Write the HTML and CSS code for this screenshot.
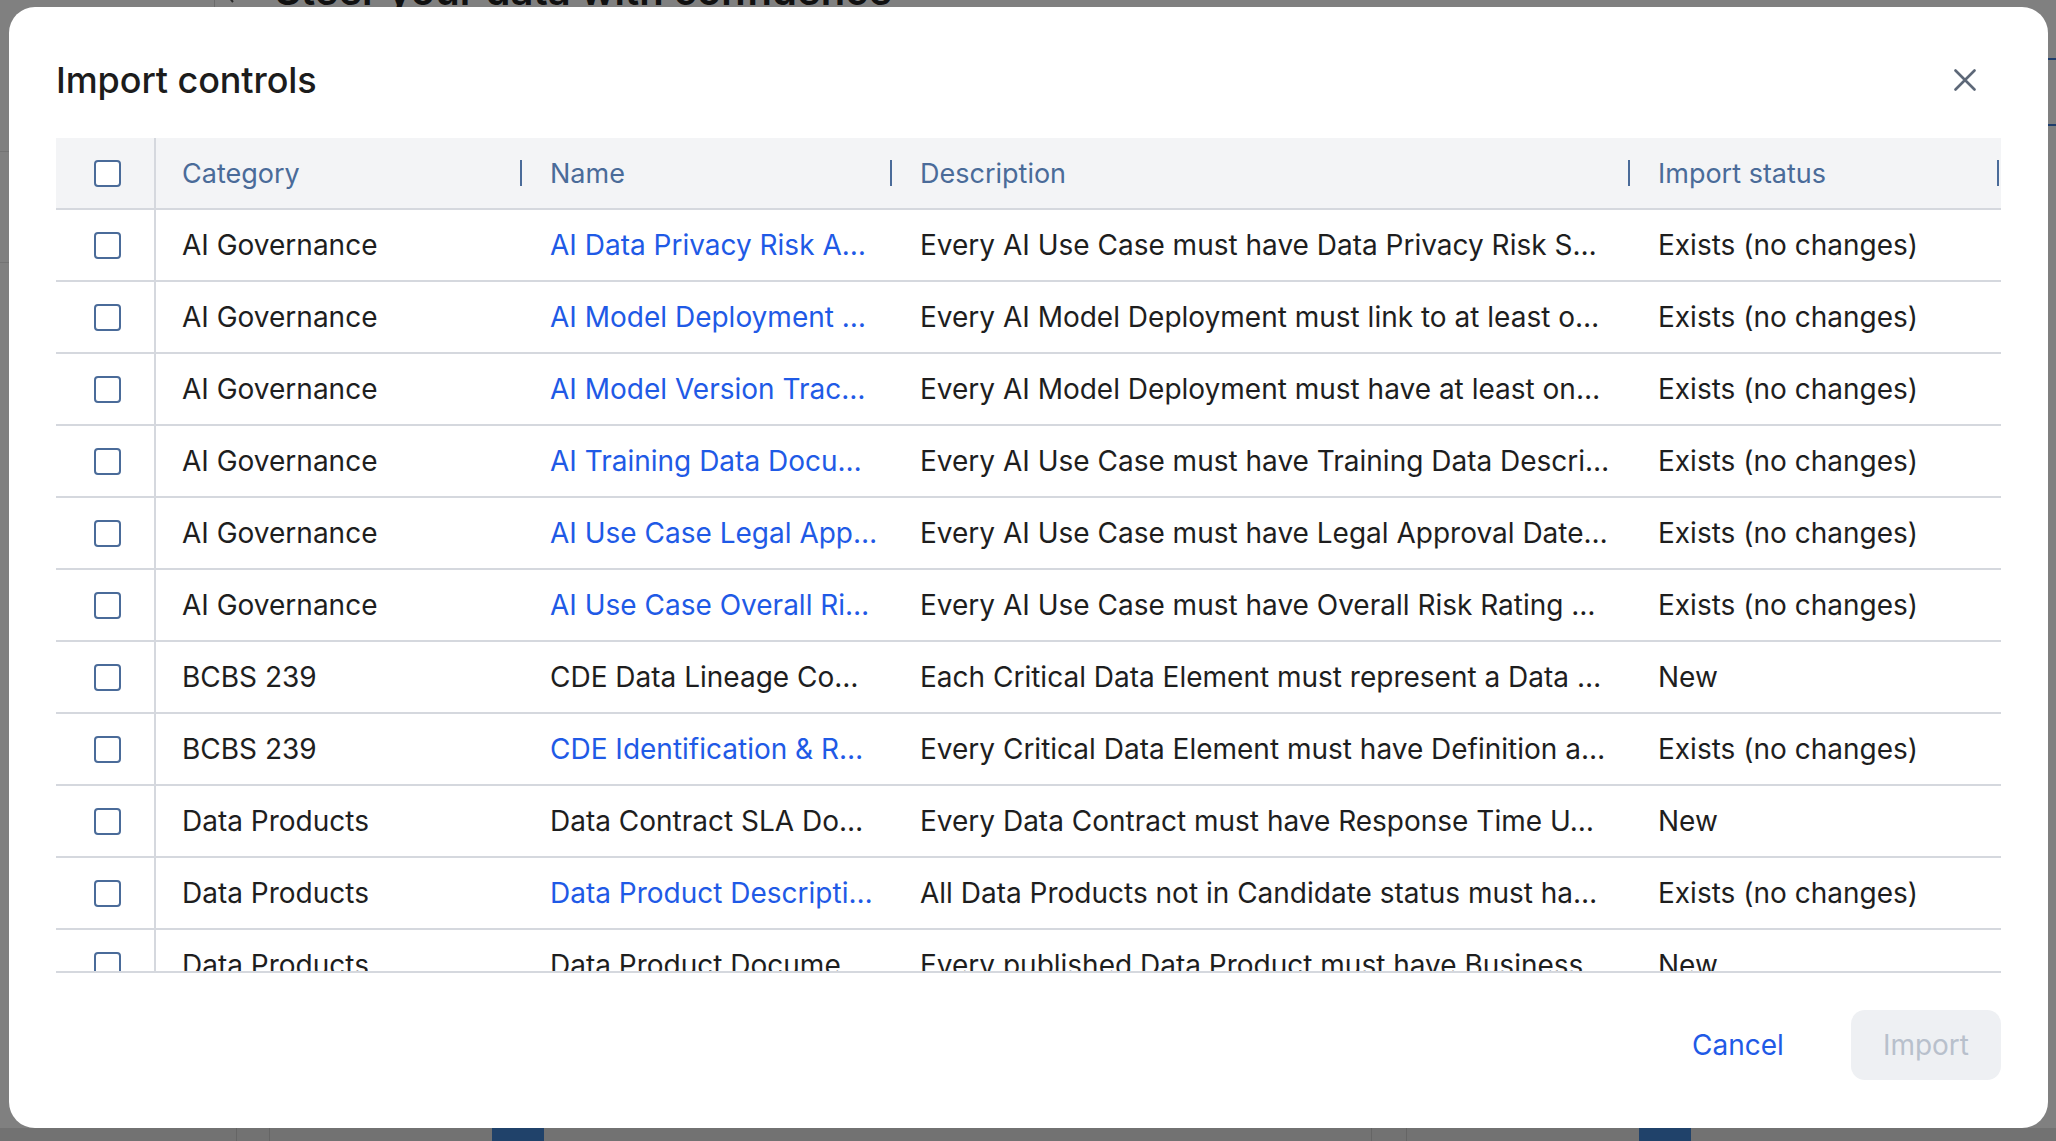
FILE: index.html
```html
<!DOCTYPE html>
<html lang="en">
<head>
    <meta charset="UTF-8">
    <meta name="viewport" content="width=device-width, initial-scale=1.0">
    <title>Import controls</title>
    <link rel="stylesheet" href="styles.css">
</head>
<body>
    <!-- dimmed app behind the dialog -->
    <div class="page">
        <div class="page-main">
            <div class="page-head">
                <span class="page-back">
                    <svg width="16" height="26" viewBox="0 0 16 26"><path d="M12 2 L3 13 L12 24" fill="none" stroke="#2b2b2b" stroke-width="2"/></svg>
                </span>
                <h2 class="page-title">Steer your data with confidence</h2>
            </div>
            <div class="page-rule rule-a"></div>
            <div class="page-rule rule-b"></div>
        </div>
        <div class="page-side">
            <div class="side-tab"></div>
            <div class="side-tab second"></div>
            <span class="side-glyph">)</span>
        </div>
        <div class="page-foot">
            <span class="foot-cell w236"></span>
            <span class="foot-cell w33 line"></span>
            <span class="foot-cell w223 line"></span>
            <span class="foot-cell w52 tab"></span>
            <span class="foot-cell w827"></span>
            <span class="foot-cell w35 line"></span>
            <span class="foot-cell w233 line"></span>
            <span class="foot-cell w52 tab"></span>
        </div>
    </div>

    <div class="overlay">
        <div class="modal">
            <div class="modal-header">
                <h1 class="modal-title">Import controls</h1>
                <button class="close-btn" aria-label="Close">
                    <svg width="22" height="22" viewBox="0 0 22 22"><path d="M1.5 1.5 L20.5 20.5 M20.5 1.5 L1.5 20.5" stroke="#5d6878" stroke-width="2.6" stroke-linecap="round"/></svg>
                </button>
            </div>

            <div class="grid">
                <div class="row head">
                    <div class="cell check"><span class="box"></span></div>
                    <div class="cell"><span>Category</span><i class="sep"></i></div>
                    <div class="cell"><span>Name</span><i class="sep"></i></div>
                    <div class="cell"><span>Description</span><i class="sep"></i></div>
                    <div class="cell"><span>Import status</span><i class="sep"></i></div>
                </div>
                <div class="rows">
                    <div class="row">
                        <div class="cell check"><span class="box"></span></div>
                        <div class="cell">AI Governance</div>
                        <div class="cell"><a class="link" href="#">AI Data Privacy Risk A…</a></div>
                        <div class="cell">Every AI Use Case must have Data Privacy Risk S…</div>
                        <div class="cell">Exists (no changes)</div>
                    </div>
                    <div class="row">
                        <div class="cell check"><span class="box"></span></div>
                        <div class="cell">AI Governance</div>
                        <div class="cell"><a class="link" href="#">AI Model Deployment …</a></div>
                        <div class="cell">Every AI Model Deployment must link to at least o…</div>
                        <div class="cell">Exists (no changes)</div>
                    </div>
                    <div class="row">
                        <div class="cell check"><span class="box"></span></div>
                        <div class="cell">AI Governance</div>
                        <div class="cell"><a class="link" href="#">AI Model Version Trac…</a></div>
                        <div class="cell">Every AI Model Deployment must have at least on…</div>
                        <div class="cell">Exists (no changes)</div>
                    </div>
                    <div class="row">
                        <div class="cell check"><span class="box"></span></div>
                        <div class="cell">AI Governance</div>
                        <div class="cell"><a class="link" href="#">AI Training Data Docu…</a></div>
                        <div class="cell">Every AI Use Case must have Training Data Descri…</div>
                        <div class="cell">Exists (no changes)</div>
                    </div>
                    <div class="row">
                        <div class="cell check"><span class="box"></span></div>
                        <div class="cell">AI Governance</div>
                        <div class="cell"><a class="link" href="#">AI Use Case Legal App…</a></div>
                        <div class="cell">Every AI Use Case must have Legal Approval Date…</div>
                        <div class="cell">Exists (no changes)</div>
                    </div>
                    <div class="row">
                        <div class="cell check"><span class="box"></span></div>
                        <div class="cell">AI Governance</div>
                        <div class="cell"><a class="link" href="#">AI Use Case Overall Ri…</a></div>
                        <div class="cell">Every AI Use Case must have Overall Risk Rating …</div>
                        <div class="cell">Exists (no changes)</div>
                    </div>
                    <div class="row">
                        <div class="cell check"><span class="box"></span></div>
                        <div class="cell">BCBS 239</div>
                        <div class="cell">CDE Data Lineage Co…</div>
                        <div class="cell">Each Critical Data Element must represent a Data …</div>
                        <div class="cell">New</div>
                    </div>
                    <div class="row">
                        <div class="cell check"><span class="box"></span></div>
                        <div class="cell">BCBS 239</div>
                        <div class="cell"><a class="link" href="#">CDE Identification &amp; R…</a></div>
                        <div class="cell">Every Critical Data Element must have Definition a…</div>
                        <div class="cell">Exists (no changes)</div>
                    </div>
                    <div class="row">
                        <div class="cell check"><span class="box"></span></div>
                        <div class="cell">Data Products</div>
                        <div class="cell">Data Contract SLA Do…</div>
                        <div class="cell">Every Data Contract must have Response Time U…</div>
                        <div class="cell">New</div>
                    </div>
                    <div class="row">
                        <div class="cell check"><span class="box"></span></div>
                        <div class="cell">Data Products</div>
                        <div class="cell"><a class="link" href="#">Data Product Descripti…</a></div>
                        <div class="cell">All Data Products not in Candidate status must ha…</div>
                        <div class="cell">Exists (no changes)</div>
                    </div>
                    <div class="row">
                        <div class="cell check"><span class="box"></span></div>
                        <div class="cell">Data Products</div>
                        <div class="cell">Data Product Docume…</div>
                        <div class="cell">Every published Data Product must have Business…</div>
                        <div class="cell">New</div>
                    </div>
                </div>
            </div>

            <div class="modal-footer">
                <button class="btn-text">Cancel</button>
                <button class="btn-primary" disabled>Import</button>
            </div>
        </div>
    </div>
</body>
</html>
```

FILE: styles.css
```css
* {
    box-sizing: border-box;
}
html, body {
    margin: 0;
    padding: 0;
    height: 100%;
    overflow: hidden;
}
body {
    font-family: Inter, "Noto Sans", sans-serif;
    color: #1e1e1e;
    background: #808080;
}

/* background app, already dimmed */
.page {
    height: 100vh;
    display: grid;
    grid-template-columns: 1fr 120px;
    grid-template-rows: 1fr 13px;
}
.page-main {
    overflow: hidden;
}
.page-head {
    display: flex;
    align-items: center;
    margin-top: -33px;
    padding-left: 214px;
    height: 48px;
}
.page-back {
    display: flex;
    align-items: center;
    height: 48px;
    padding: 0 8px 0 6px;
    border-left: 1px solid #6c6c6c;
    margin-right: 30px;
}
.page-title {
    margin: 0;
    font-size: 40px;
    line-height: 48px;
    font-weight: 600;
    color: #101010;
    white-space: nowrap;
}
.page-rule {
    height: 1px;
    background: #737373;
}
.rule-a {
    margin-top: 136px;
}
.rule-b {
    margin-top: 110px;
}
.page-side {
    padding-top: 58px;
}
.side-tab {
    height: 2px;
    background: #1f3d6c;
}
.side-tab.second {
    margin-top: 64px;
}
.side-glyph {
    display: block;
    margin-top: 110px;
    padding-left: 100px;
    font-size: 34px;
    color: #2a2a2a;
}
.page-foot {
    grid-column: 1 / 3;
    display: flex;
    background: #727272;
}
.foot-cell {
    display: block;
    height: 13px;
}
.foot-cell.line {
    border-left: 1px solid #656565;
}
.foot-cell.tab {
    background: #20426a;
}
.w236 { width: 236px; }
.w33 { width: 33px; }
.w223 { width: 223px; }
.w52 { width: 52px; }
.w827 { width: 827px; }
.w35 { width: 35px; }
.w233 { width: 233px; }

/* dialog */
.overlay {
    position: fixed;
    inset: 0;
    display: flex;
    padding: 7px 8px 13px 9px;
}
.modal {
    flex: 1;
    display: flex;
    flex-direction: column;
    background: #fff;
    border-radius: 26px;
    padding: 47px 47px 48px;
}
.modal-header {
    display: flex;
    align-items: center;
    justify-content: space-between;
    height: 52px;
    margin-bottom: 32px;
}
.modal-title {
    margin: 0;
    font-size: 36px;
    font-weight: 500;
    color: #1c1c1c;
    letter-spacing: -0.1px;
}
.close-btn {
    display: flex;
    align-items: center;
    justify-content: center;
    width: 48px;
    height: 48px;
    margin-right: 12px;
    padding: 0;
    border: none;
    background: none;
    cursor: pointer;
}

.grid {
    height: 835px;
    overflow: hidden;
    border-bottom: 2px solid #d5d8de;
}
.row {
    display: grid;
    grid-template-columns: 100px 368px 370px 738px 1fr;
    height: 72px;
    border-bottom: 2px solid #d5d8de;
    font-size: 28px;
}
.row.head {
    background: #f3f4f6;
    color: #4a6b99;
    font-size: 27px;
}
.cell {
    display: flex;
    align-items: center;
    min-width: 0;
    padding: 0 26px;
    white-space: nowrap;
    overflow: hidden;
}
.head .cell {
    justify-content: space-between;
    padding-right: 2px;
}
.sep {
    display: block;
    width: 2px;
    height: 26px;
    background: #4a6b99;
}
.cell.check {
    justify-content: center;
    padding: 0 0 0 4px;
    border-right: 2px solid #d5d8de;
}
.head .cell.check {
    padding: 0 0 0 4px;
    justify-content: center;
}
.box {
    display: block;
    width: 27px;
    height: 27px;
    border: 2px solid #4a6b99;
    border-radius: 4px;
    background: #fff;
}
.link {
    color: #1f5ae6;
    text-decoration: none;
}

.modal-footer {
    display: flex;
    justify-content: flex-end;
    align-items: center;
    gap: 35px;
    margin-top: 37px;
}
.btn-text, .btn-primary {
    height: 70px;
    padding: 0 32px;
    border: none;
    border-radius: 14px;
    font-family: inherit;
    font-size: 28px;
    cursor: pointer;
}
.btn-text {
    background: none;
    color: #1f5ae6;
}
.btn-primary {
    background: #eef0f3;
    color: #b8c0cc;
    cursor: default;
}
```
